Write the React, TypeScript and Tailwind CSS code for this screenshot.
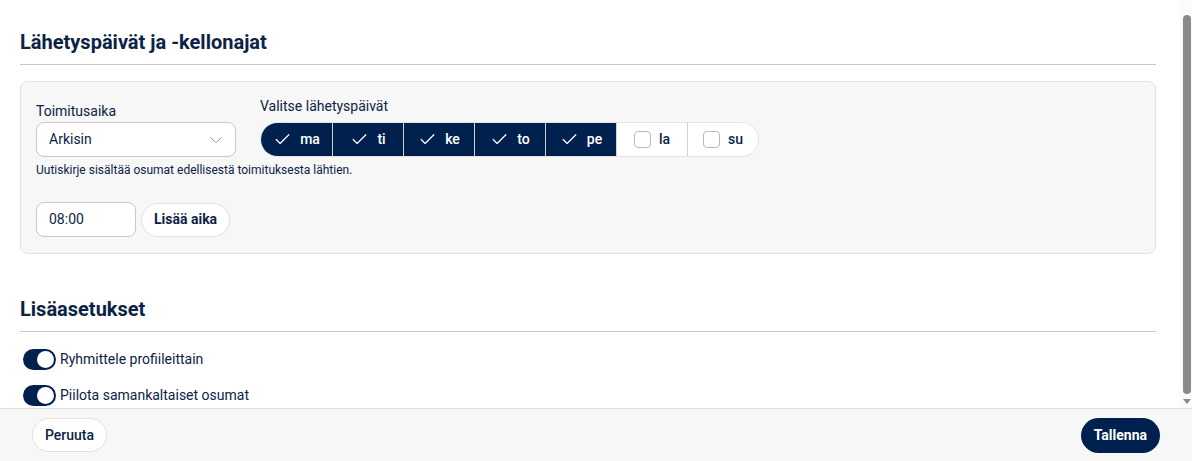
import { Check, ChevronDown } from "lucide-react"

const days = [
    { id: "ma", on: true },
    { id: "ti", on: true },
    { id: "ke", on: true },
    { id: "to", on: true },
    { id: "pe", on: true },
    { id: "la", on: false },
    { id: "su", on: false },
]

const Toggle = ({ label }: { label: string }) => (
    <label className="flex items-center gap-[4px] ml-[3px] h-[24px]">
        <span className="relative w-[33px] h-[21px] rounded-full bg-[#00214d] flex items-center justify-end pr-[2px]">
            <span className="w-[17px] h-[17px] rounded-full bg-white" />
        </span>
        <span className="text-[14px] text-[#0b2345]">{label}</span>
    </label>
)

const App = () => {
    return (
        <div
            className="w-[1192px] h-[461px] flex flex-col bg-white text-[#0b2345]"
            style={{ fontFamily: "Roboto, 'Liberation Sans', sans-serif" }}
        >
            <div className="flex-1 min-h-0 flex">
                {/* Scrollable content */}
                <div className="flex-1 overflow-hidden pl-5 pr-6">
                    <h2 className="pt-[28px] pb-[8px] text-[20px] leading-[28px] font-bold border-b border-[#c8c8c8]">
                        Lähetyspäivät ja -kellonajat
                    </h2>

                    <div className="mt-[16px] rounded-[8px] border border-[#e3e3e3] bg-[#f7f7f7] pt-[14px] pb-[16px] px-[15px]">
                        <div className="flex items-end gap-[24px]">
                            <div className="flex flex-col">
                                <span className="text-[14px] leading-[20px] mb-[1px]">Toimitusaika</span>
                                <div className="w-[200px] h-[35px] rounded-[8px] border border-[#c9c9c9] bg-white flex items-center justify-between pl-[12px] pr-[8px]">
                                    <span className="text-[14px]">Arkisin</span>
                                    <ChevronDown size={22} strokeWidth={1} className="text-[#8a8a8a]" />
                                </div>
                            </div>
                            <div className="flex flex-col">
                                <span className="text-[14px] leading-[20px] mb-[6px]">Valitse lähetyspäivät</span>
                                <div className="flex h-[35px] rounded-full border border-[#e2e2e2] bg-white overflow-hidden">
                                    {days.map((d, i) => (
                                        <div
                                            key={d.id}
                                            className={`w-[71px] flex items-center justify-center gap-[8px] text-[14px] font-medium ${i > 0 ? "border-l border-[#cfcfcf]" : ""} ${d.on ? "bg-[#00214d] text-white" : "bg-white text-[#0b2345]"}`}
                                        >
                                            {d.on ? (
                                                <Check size={19} strokeWidth={1.5} />
                                            ) : (
                                                <span className="w-[17px] h-[17px] rounded-[4px] border border-[#b9b9b9] bg-white" />
                                            )}
                                            <span>{d.id}</span>
                                        </div>
                                    ))}
                                </div>
                            </div>
                        </div>

                        <p className="mt-[5px] text-[12px] leading-[16px]">
                            Uutiskirje sisältää osumat edellisestä toimituksesta lähtien.
                        </p>

                        <div className="mt-[24px] flex items-center gap-[5px]">
                            <div className="w-[100px] h-[35px] rounded-[8px] border border-[#c9c9c9] bg-white flex items-center pl-[12px] text-[14px]">
                                08:00
                            </div>
                            <button className="h-[34px] px-[12px] rounded-full border border-[#e2e2e2] bg-white text-[14px] font-bold">
                                Lisää aika
                            </button>
                        </div>
                    </div>

                    <h2 className="mt-[41px] pb-[8px] text-[20px] leading-[28px] font-bold border-b border-[#c8c8c8]">
                        Lisäasetukset
                    </h2>

                    <div className="mt-[15px] pb-[16px] flex flex-col gap-[12px]">
                        <Toggle label="Ryhmittele profiileittain" />
                        <Toggle label="Piilota samankaltaiset osumat" />
                    </div>
                </div>

                {/* Scrollbar */}
                <div className="w-[12px] shrink-0 bg-[#fbfbfb] flex flex-col items-center pt-[15px] pb-[4px] pl-[1px]">
                    <div className="w-[8px] flex-1 rounded-full bg-[#8a8a8a]" />
                    <div className="mt-[5px] w-0 h-0 border-l-[4px] border-r-[4px] border-t-[5px] border-l-transparent border-r-transparent border-t-[#8a8a8a]" />
                </div>
            </div>

            {/* Footer */}
            <div className="h-[53px] shrink-0 border-t border-[#dcdcdc] bg-[#f7f7f7] flex items-center justify-between px-8">
                <button className="h-[34px] px-[12px] rounded-full border border-[#e2e2e2] bg-white text-[14px] font-medium">
                    Peruuta
                </button>
                <button className="h-[35px] px-[13px] rounded-full bg-[#00214d] text-white text-[14px] font-bold">
                    Tallenna
                </button>
            </div>
        </div>
    )
}

export default App
